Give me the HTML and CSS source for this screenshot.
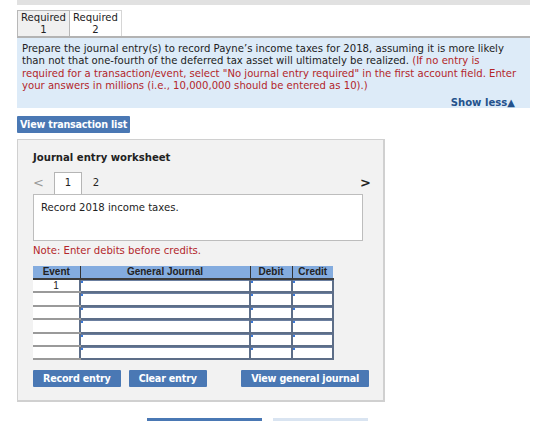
FILE: index.html
```html
<!DOCTYPE html>
<html>
<head>
<meta charset="utf-8">
<link rel="stylesheet" href="styles.css">
</head>
<body>
<div class="page">
  <div class="topbar"></div>
  <div class="tabs">
    <div class="tab">Required<br>1</div>
    <div class="tab active">Required<br>2</div>
  </div>
  <div class="prompt">
    <p class="prompt-text">Prepare the journal entry(s) to record Payne’s income taxes for 2018, assuming it is more likely than not that one-fourth of the deferred tax asset will ultimately be realized. <span class="hint">(If no entry is required for a transaction/event, select "No journal entry required" in the first account field. Enter your answers in millions (i.e., 10,000,000 should be entered as 10).)</span></p>
    <div class="show-less">Show less<span class="tri">▲</span></div>
  </div>
  <button class="btn list-btn">View transaction list</button>
  <div class="worksheet">
    <h3 class="ws-title">Journal entry worksheet</h3>
    <div class="pager">
      <span class="arrow prev">&lt;</span>
      <span class="page-tab current">1</span>
      <span class="page-tab">2</span>
      <span class="arrow next">&gt;</span>
    </div>
    <div class="record-box">Record 2018 income taxes.</div>
    <div class="note">Note: Enter debits before credits.</div>
    <table class="journal">
      <colgroup>
        <col class="c-event"><col class="c-gj"><col class="c-dr"><col class="c-cr">
      </colgroup>
      <thead>
        <tr><th class="first">Event</th><th>General Journal</th><th>Debit</th><th>Credit</th></tr>
      </thead>
      <tbody>
        <tr><td class="ev">1</td><td class="in"><div class="field"></div></td><td class="in"><div class="field"></div></td><td class="in"><div class="field"></div></td></tr>
        <tr><td class="ev"></td><td class="in"><div class="field"></div></td><td class="in"><div class="field"></div></td><td class="in"><div class="field"></div></td></tr>
        <tr><td class="ev"></td><td class="in"><div class="field"></div></td><td class="in"><div class="field"></div></td><td class="in"><div class="field"></div></td></tr>
        <tr><td class="ev"></td><td class="in"><div class="field"></div></td><td class="in"><div class="field"></div></td><td class="in"><div class="field"></div></td></tr>
        <tr><td class="ev"></td><td class="in"><div class="field"></div></td><td class="in"><div class="field"></div></td><td class="in"><div class="field"></div></td></tr>
        <tr><td class="ev"></td><td class="in"><div class="field"></div></td><td class="in"><div class="field"></div></td><td class="in"><div class="field"></div></td></tr>
      </tbody>
    </table>
    <div class="actions">
      <button class="btn">Record entry</button>
      <button class="btn">Clear entry</button>
      <button class="btn view-gj">View general journal</button>
    </div>
  </div>
  <div class="footer-bars">
    <div class="fbar dark"></div>
    <div class="fbar light"></div>
  </div>
</div>
</body>
</html>
```

FILE: styles.css
```css
html, body {
  margin: 0;
  padding: 0;
  background: #fff;
}

body {
  font-family: "DejaVu Sans", Verdana, sans-serif;
  color: #222;
}

.page {
  width: 513px;
  margin-left: 17px;
}

.topbar {
  height: 5px;
  background: #e1e1e1;
}

.tabs {
  display: flex;
  margin-top: 5px;
  height: 26px;
}

.tab {
  width: 53px;
  box-sizing: border-box;
  font-size: 10.1px;
  line-height: 12px;
  text-align: center;
  padding-top: 1px;
  background: #f0f0f0;
  border: 1px solid #b8b8b8;
  border-bottom: none;
}

.tab.active {
  width: 52px;
  background: #fff;
  border-left: none;
  border-color: #d6d6d6;
}

.prompt {
  background: #ddebf8;
  border-top: 2px solid #b3b3b3;
  padding: 5px 10px 3px 5px;
  height: 62px;
}

.prompt-text {
  margin: 0;
  font-size: 10.1px;
  line-height: 12.3px;
}

.hint {
  color: #b3262a;
}

.show-less {
  text-align: right;
  font-size: 10.1px;
  font-weight: bold;
  color: #24528c;
  margin-top: 5px;
  padding-right: 5px;
}

.tri {
  font-size: 10px;
}

.btn {
  font-family: "DejaVu Sans", Verdana, sans-serif;
  font-size: 9.6px;
  letter-spacing: -0.2px;
  font-weight: bold;
  color: #fff;
  background: #4a78b4;
  border: none;
  border-radius: 1px;
  height: 17px;
  padding: 0 10px;
  line-height: 17px;
  white-space: nowrap;
}

.list-btn {
  display: block;
  margin-top: 8px;
  padding: 0 3px;
}

.worksheet {
  margin-top: 6px;
  width: 368px;
  box-sizing: border-box;
  background: #f2f2f2;
  border: 1px solid #d0d0d0;
  border-right-width: 2px;
  border-bottom-width: 2px;
  padding: 11px 0 13px 15px;
}

.ws-title {
  margin: 0;
  font-size: 10.1px;
  font-weight: bold;
  line-height: 13px;
}

.pager {
  display: flex;
  align-items: flex-end;
  margin-top: 8px;
  height: 22px;
  font-size: 10.1px;
  width: 338px;
}

.arrow {
  color: #999;
  font-size: 13px;
  line-height: 22px;
  align-self: center;
}

.prev {
  margin-right: 10px;
}

.next {
  margin-left: auto;
  color: #222;
  font-weight: bold;
}

.page-tab {
  width: 28px;
  height: 21px;
  box-sizing: border-box;
  text-align: center;
  line-height: 19px;
}

.page-tab.current {
  background: #fff;
  border: 1px solid #b5b5b5;
  border-bottom: none;
  height: 22px;
}

.record-box {
  width: 330px;
  height: 47px;
  box-sizing: border-box;
  background: #fff;
  border: 1px solid #bdbdbd;
  padding: 7px 7px;
  font-size: 10.1px;
}

.note {
  margin-top: 3px;
  color: #b3262a;
  font-size: 10.1px;
  height: 15px;
  line-height: 14px;
}

.journal {
  margin-top: 7px;
  border-collapse: collapse;
  table-layout: fixed;
  width: 300px;
  font-family: "Liberation Sans", Arial, sans-serif;
}

.c-event { width: 47px; }
.c-gj { width: 170px; }
.c-dr { width: 42px; }
.c-cr { width: 41px; }

.journal th {
  background: #84acdf;
  font-size: 10px;
  font-weight: bold;
  color: #222;
  height: 12px;
  padding: 0;
  border-left: 1px solid #333;
  border-bottom: 2px solid #3c3c3c;
  line-height: 12px;
}

.journal th.first {
  border-left: none;
}

.journal td {
  padding: 0;
  height: 11.4px;
}

.journal td.ev {
  background: #fff;
  border-bottom: 2px solid #9a9a9a;
  font-size: 10px;
  text-align: center;
  line-height: 11px;
  vertical-align: top;
}

.journal td.in {
  border: 2px solid #5d6e88;
  border-top: none;
  background: #fff;
}

.field {
  position: relative;
  height: 11.4px;
  border-top: 1px solid #6b7fa0;
  box-sizing: border-box;
}

.field::before {
  content: "";
  position: absolute;
  left: 0;
  top: 0;
  width: 2px;
  height: 2px;
  background: #3a78d8;
}

.actions {
  display: flex;
  margin-top: 10px;
  width: 336px;
}

.actions .btn + .btn {
  margin-left: 8px;
}

.actions .view-gj {
  margin-left: auto !important;
}

.footer-bars {
  display: flex;
  margin-top: 16px;
  padding-left: 130px;
}

.fbar {
  height: 6px;
}

.fbar.dark {
  width: 115px;
  background: #4a78b4;
}

.fbar.light {
  width: 95px;
  margin-left: 11px;
  background: #d9e4f1;
}
```
